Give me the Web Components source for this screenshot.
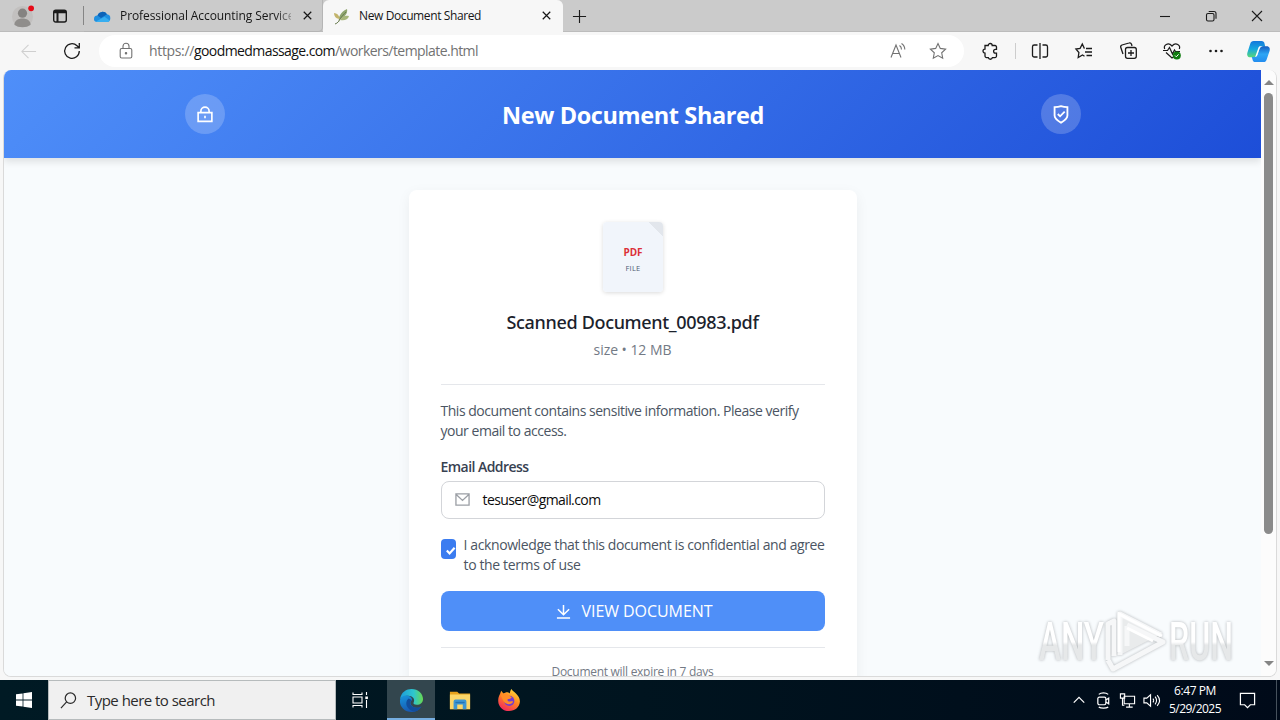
<!DOCTYPE html>
<html lang="en">
<head>
<meta charset="utf-8">
<title>New Document Shared</title>
<style>
	html, body { margin: 0; height: 100%; overflow: hidden; }
	body {
		width: 1280px;
		height: 720px;
		display: flex;
		flex-direction: column;
		font-family: "Open Sans", "Noto Sans", sans-serif;
		color: #1b1b1b;
	}
</style>
</head>
<body>
<browser-window>
	<browser-tab slot="tab" icon="onedrive" faded><fit-text w="180">Professional Accounting Services</fit-text></browser-tab>
	<browser-tab slot="tab" icon="leaf" active><fit-text w="122">New Document Shared</fit-text></browser-tab>
	<share-header><fit-text w="262">New Document Shared</fit-text></share-header>
	<document-card></document-card>
</browser-window>
<task-bar></task-bar>
<any-watermark></any-watermark>

<script>
const ICONS = {
	profile: [24, `<circle cx="12" cy="12" r="11" fill="#c2c0bf"/><circle cx="12" cy="8.500" r="4.800" fill="#858381"/><path d="M3.500 20.500c0-8.500 17-8.500 17 0-4 3.500-13 3.500-17 0z" fill="#8f8d8b"/><circle cx="21" cy="3.500" r="3" fill="#e60b18"/>`],
	workspace: [16, `<rect x="1.700" y="2.200" width="12.600" height="11.800" rx="2"/><path d="M2 4.300h12M5.500 5v9M2 2.900h12" stroke-width="2"/>`, 1.4],
	onedrive: [18, `<path d="M1 12.500a3.700 3.700 0 0 1 3.500-4A5.300 5.300 0 0 1 14 7.300a4 4 0 0 1 3.300 4.200c0 2-1.500 3.500-3.300 3.500H4c-1.700 0-3-1-3-2.500z" fill="#1f8fe0"/><path d="M4.500 8.500A5.300 5.300 0 0 1 14 7.300L8 11z" fill="#0d63b8"/><path d="M3 14.400 11.500 9.800l5.300 3.600c-.6 1-1.600 1.600-2.800 1.600H4z" fill="#37aef0"/>`],
	leaf: [18, `<g stroke="none"><path d="M7 15C6 11 8 5 15 2c1 4-2 8-7 10z" fill="#8fa56f"/><path d="M8 13c2-4 5-5 9-4-1 4-5 5-9 4z" fill="#a8b77b"/><path d="M8 12C7 8 5 6 2 6c0 3 2 6 6 6z" fill="#c3b46c"/></g><path d="M3 17c3-1 4-3 5-5 2-3 4-5 6-7" stroke="#697c50"/>`],
	close: [16, `<path d="M4 4l8 8M12 4l-8 8"/>`, 1.3],
	plus: [16, `<path d="M8 1v14M1 8h14"/>`, 1.2],
	minimize: [16, `<path d="M3 8.500h10"/>`, 1.1],
	restore: [16, `<rect x="3.500" y="5.500" width="7.500" height="7.500" rx="1.500"/><path d="M5.700 3.500H11a2 2 0 0 1 2 2v5.300"/>`, 1.1],
	exit: [16, `<path d="M3 3l10 10M13 3L3 13"/>`, 1.1],
	back: [18, `<path d="M17 9H2M9 2L2 9l7 7"/>`, 1.1],
	reload: [18, `<path d="M16.300 9a7.300 7.300 0 1 1-2.300-5.300l2.300 2.100M16.300 1v4.800h-4.800"/>`, 1.3],
	lock: [18, `<rect x="3.200" y="6.500" width="11.600" height="9.500" rx="1.500"/><path d="M6 6.500V4.300a3 3 0 0 1 6 0v2.200"/><circle cx="9" cy="11.200" r=".7" fill="currentColor"/>`, 1.1],
	read: [18, `<path d="M2 15.500L7 3l5 12.500M3.700 11.500h6.700M10.500 3.500c1.500 1 2 2.300 2 4M12.500 1.500c2.300 1.500 3.300 3.500 3.300 6"/>`, 1.1],
	star: [18, `<path d="M9 1.500l2.300 4.900 5.300.7-3.900 3.700 1 5.400L9 13.600l-4.700 2.600 1-5.400-3.900-3.700 5.300-.7z"/>`, 1.1],
	puzzle: [18, `<path d="M4 3.500h3.200a2 2 0 0 1 4 0H14a1.500 1.500 0 0 1 1.500 1.500v2.300h-1a1.900 1.900 0 0 0 0 3.800h1v3a1.500 1.500 0 0 1-1.500 1.500h-2.600a2.100 2.100 0 0 1-4.100 0H5.500A1.500 1.500 0 0 1 4 14.100v-3a2 2 0 1 1 0-4z"/>`, 1.3],
	split: [18, `<path d="M6.500 3H3.300A1.800 1.800 0 0 0 1.500 4.800v8.400A1.800 1.800 0 0 0 3.300 15h3.200M11.500 3h3.200a1.800 1.800 0 0 1 1.800 1.800v8.400a1.800 1.800 0 0 1-1.800 1.800h-3.200M9 1v16"/>`, 1.3],
	favorites: [18, `<path d="M9.500 6.300h-.2L7.300 2 5.100 6.300l-4.200.7 3 3.500-.7 5L7.500 13l2 1.200M11 6.500h6M10 10h7M11.500 13.500H17"/>`, 1.3],
	collections: [18, `<rect x="6.500" y="5.500" width="10.800" height="10.800" rx="2"/><path d="M12 8v6M9 11h6M4 12L1.800 5.500A2 2 0 0 1 3 3l7-2a2 2 0 0 1 2.500 1.200L13 4"/>`, 1.3],
	heart: [18, `<path d="M1.700 7C.2 3.500 5-.5 9 4c4-4.500 8.800-.5 7.300 3M3 10.500L9 16l2-1.500M0 8.500h4.500L6.500 5.500 9.500 12l2-4 1 1.500H17"/><circle cx="13.800" cy="13.500" r="4" fill="#107c10" stroke="none"/><path d="M12 13.500l1.300 1.300 2.300-2.500" stroke="#fff" stroke-width="1"/>`, 1.2],
	dots: [18, `<g fill="currentColor" stroke="none"><circle cx="3.500" cy="9" r="1.300"/><circle cx="9" cy="9" r="1.300"/><circle cx="14.500" cy="9" r="1.300"/></g>`],
	copilot: [26, `<defs><linearGradient id="a" x2="0" y2="1"><stop stop-color="#1477dc"/><stop offset=".5" stop-color="#16a8df"/><stop offset="1" stop-color="#58d878"/></linearGradient><linearGradient id="b" x2="0" y2="1"><stop stop-color="#145dc0"/><stop offset=".5" stop-color="#2ea6f5"/><stop offset="1" stop-color="#238cef"/></linearGradient></defs><g stroke="none"><path d="M8 2h8c2 0 3 1 3.300 3l.7 3h-3c-2 0-3 1-3.600 3l-1.700 5c-.6 2-1.700 3-3.700 3H4.500C1.500 19 .7 16.500 1.500 14L4.400 5C5 3 6 2 8 2z" fill="url(#a)"/><path d="M18 24h-8c-2 0-3-1-3.300-3L6 18.600h2.500c2 0 3-1 3.600-3l1.700-5c.6-2 1.700-3 3.700-3h4c3 0 3.800 2.500 3 5l-2.900 8.400c-.6 2-1.600 3-3.600 3z" fill="url(#b)"/><path d="M9.500 18.600L13 8.800c.4-1 1-1.300 2-1.300h2.500c-2 .4-3 1.300-3.700 3.300L12 16c-.4 1.500-1.200 2.300-2.500 2.600z" fill="#fff"/></g>`],
	padlock: [24, `<path d="M4.500 10.500h15v9.500h-15zM7.500 10.500V9a4.500 4.500 0 0 1 9 0v1.500M12 14v2.500"/>`, 1.8],
	shield: [24, `<path d="M12 3.500c2.500.8 4.500 1 7 1v9c0 3.500-3 5.500-7 8-4-2.500-7-4.500-7-8v-9c2.500 0 4.500-.2 7-1zM8.500 12l2.500 2.500 5-5"/>`, 2],
	mail: [16, `<path d="M1 2h14v12H1zM1 2.500l7 6.500 7-6.500"/>`, 1.4],
	download: [16, `<path d="M8 1v10M2 5.500L8 11.500l6-6M1 14.800h14"/>`, 1.6],
	check: [12, `<path d="M2 6l3 3.200L10.500 3"/>`, 2.4],
	windows: [16, `<path d="M0 2.300L6.600 1.400V7.600H0zM7.400 1.300L16 0v7.600H7.400zM0 8.400h6.600v6.200L0 13.700zM7.400 8.400H16V16l-8.600-1.300z" fill="currentColor" stroke="none"/>`],
	search: [18, `<circle cx="11" cy="6.500" r="5.500"/><path d="M7 10.500L1 17"/>`, 1.3],
	taskview: [18, `<path d="M2 1.500v2h9v-2M2 6h9v6H2zM2 16.500v-2h9v2M15.500 1v3M15.500 9v8"/><path d="M14.300 5.500h2.600v2.600h-2.600z" fill="currentColor" stroke="none"/>`, 1.1],
	edge: [26, `<defs><linearGradient id="t" x2="1"><stop stop-color="#1c9cdc"/><stop offset=".6" stop-color="#2fc6cd"/><stop offset="1" stop-color="#68d94f"/></linearGradient><linearGradient id="e" y2="1" x2=".4"><stop stop-color="#1796de"/><stop offset="1" stop-color="#1757b0"/></linearGradient></defs><g stroke="none"><path d="M1 12C2 4 8 1 13 1c7 0 12 5 12 10.500 0 4-3 6-6.500 6-3 0-4-1.300-3.200-2.600C17 11.500 14 8 9.500 8 5.500 8 2 10 1 12z" fill="url(#t)"/><path d="M1 13c.5-4 5-6 8.500-5 3 .8 4.500 3 4 4.500-4 3 0 8 4.800 8 2.200 0 3.700-.5 5-1.300C21 23 17 25 13 25 6.500 25 .5 20 1 13z" fill="url(#e)"/><path d="M10 11c-5 4-2 12 6 13.600C20 24 22 21 23.300 19.200c-1.300.8-2.800 1.300-5 1.300-5 0-8.800-4-5.200-8z" fill="#124d9b"/></g>`],
	explorer: [24, `<g stroke="none"><path d="M1 3h8l2 2h12v17H1z" fill="#e6a11c"/><path d="M1 6h22v16H1z" fill="#fbd669"/><path d="M5 22v-8.500a2 2 0 0 1 2-2h10a2 2 0 0 1 2 2V22h-4v-5H9v5z" fill="#3d96d2"/><path d="M7 14h10v1.500H7z" fill="#2373b4"/></g>`],
	firefox: [26, `<defs><linearGradient id="f" x1=".8" x2=".25" y2="1"><stop stop-color="#ffe13c"/><stop offset=".45" stop-color="#ff8a20"/><stop offset="1" stop-color="#f4235f"/></linearGradient></defs><g stroke="none"><path d="M3.500 6l1-3 2.500 3 3-1.500c2 0 3 .5 4 1.500 0-2 .5-3.500 1.700-5 .8 2 3 3 4.800 5 2.500 2.500 4.500 5 4.300 9C24.300 21 19.500 25 13 25S1.500 20.500 1.300 14c0-3 .5-5 2.200-8z" fill="url(#f)"/><circle cx="13.300" cy="14" r="5.500" fill="#743bd1"/><path d="M4 8c3-3 7-2.500 9 0l3 2c-1 2-3 2-4 2-1 .5-1 2 1 2.500 2 .3 3-.5 4.500 0-1 3.500-7 4-9.500 1S5.500 10 4 8z" fill="#ff8d27"/></g>`],
	chevron: [16, `<path d="M2 11l6-6 6 6"/>`, 1.4],
	meet: [18, `<rect x="3" y="5.500" width="8.500" height="8" rx="1.500"/><path d="M11.500 8.500l3-2v6l-3-2M4 2.500c2.500-2 7.500-2 10 0M4 16c2.500 1.500 7.500 1.500 10 0"/>`, 1.3],
	network: [18, `<path d="M5.500 4.500h11v8h-11zM11 12.500V16M7.500 16h7M1.500 2h4.500v4.500H1.500zM3.700 6.500V14h2"/>`, 1.2],
	volume: [18, `<path d="M1 6.500h3L8 3v12l-4-3.500H1zM10.500 7c1 1 1 3 0 4M12.800 5c2 2.500 2 5.500 0 8M15 3.300c3 3.500 3 8 0 11.500"/>`, 1.2],
	notice: [18, `<path d="M1.500 1.500h15v12H12L9 16.500l-3-3H1.500z"/>`, 1.3],
};

class UiIcon extends HTMLElement {
	connectedCallback() {
		const size = this.getAttribute('size') || 18;
		const [box, shapes, stroke] = ICONS[this.getAttribute('name')];
		this.attachShadow({mode: 'open'}).innerHTML = `
			<style>
				:host { display: block; flex: none; width: ${size}px; height: ${size}px; }
				svg { display: block; width: 100%; height: 100%; overflow: visible; }
			</style>
			<svg viewBox="0 0 ${box} ${box}" fill="none" ${stroke ? `stroke="currentColor" stroke-width="${stroke}"` : ''}>${shapes}</svg>
		`;
	}
}

// One line of text, tracked so that it takes up exactly w pixels.
class FitText extends HTMLElement {
	connectedCallback() {
		this.attachShadow({mode: 'open'}).innerHTML = `
			<style>
				:host { display: inline-flex; flex: none; }
				span { white-space: nowrap; flex: none; }
			</style>
			<span><slot></slot></span>
		`;
		const width = +this.getAttribute('w');
		const span = this.shadowRoot.querySelector('span');
		const natural = span.getBoundingClientRect().width;
		span.style.letterSpacing = `${(width - natural) / this.textContent.length}px`;
		this.style.width = `${width}px`;
	}
}

class BrowserTab extends HTMLElement {
	connectedCallback() {
		this.attachShadow({mode: 'open'}).innerHTML = `
			<style>
				:host {
					box-sizing: border-box;
					width: 239px;
					height: 32px;
					padding: 0 7px 0 9px;
					display: flex;
					align-items: center;
					gap: 9px;
					font-size: 12px;
					color: #161616;
					border-bottom: 1px solid #b5b5b5;
					border-right: 1px solid #b5b5b5;
					border-radius: 0 0 5px 0;
				}
				:host([active]) {
					width: 240px;
					padding-right: 8px;
					background: #f7f7f7;
					border-color: #f7f7f7;
					border-radius: 6px 6px 0 0;
				}
				.label { flex: 1; min-width: 0; overflow: hidden; display: flex; line-height: 20px; }
				:host([faded]) .label { mask-image: linear-gradient(90deg, #000 155px, transparent 178px); }
			</style>
			<ui-icon name="${this.getAttribute('icon')}" size="18"></ui-icon>
			<div class="label"><slot></slot></div>
			<ui-icon name="close" size="15"></ui-icon>
		`;
	}
}

class BrowserWindow extends HTMLElement {
	connectedCallback() {
		this.attachShadow({mode: 'open'}).innerHTML = `
			<style>
				:host { display: flex; flex-direction: column; height: 680px; background: #f7f7f7; }
				.strip { height: 32px; display: flex; background: #cbcbcb; box-shadow: inset 0 -1px #bcbcbc; }
				.cell { display: flex; align-items: center; justify-content: center; flex: none; }
				.rule { width: 1px; height: 19px; margin: 6px 0 0; background: #858585; }
				.space { flex: 1; }
				.bar { height: 38px; display: flex; align-items: center; }
				.pill {
					box-sizing: border-box;
					width: 865px;
					height: 32px;
					padding: 0 17px 0 18px;
					display: flex;
					align-items: center;
					border-radius: 16px;
					background: #fff;
					color: #727272;
					font-size: 14px;
				}
				.pill b { font-weight: 400; color: #111; display: flex; }
				.url { flex: 1; display: flex; margin-left: 14px; line-height: 20px; }
				.pill .read { margin-right: 22px; }
				.divider { width: 1px; height: 16px; background: #cdcdcd; margin-right: 2px; }
				.view {
					box-sizing: border-box;
					height: 607px;
					margin: 0 3px;
					display: flex;
					overflow: hidden;
					border: 1px solid #dadada;
					border-top: 0;
					border-radius: 8px;
					background: #f8fafc;
				}
				.page { width: 1257px; overflow: hidden; background: #f8fbfd; }
				.scroll {
					flex: 1;
					display: flex;
					flex-direction: column;
					align-items: center;
					background: #fcfcfc;
				}
				.up, .down { border: 5px solid transparent; width: 0; height: 0; }
				.up { border-top: 0; border-bottom-color: #858585; margin: 10px 0 8px; }
				.down { border-bottom: 0; border-top-color: #858585; margin: auto 0 10px; }
				.thumb { width: 9px; height: 441px; border-radius: 5px; background: #8b8b8b; }
			</style>
			<div class="strip">
				<div class="cell" style="width:44px"><ui-icon name="profile" size="23"></ui-icon></div>
				<div class="cell" style="width:32px"><ui-icon name="workspace" size="16"></ui-icon></div>
				<div class="cell" style="width:8px;align-items:flex-start;justify-content:flex-end"><div class="rule"></div></div>
				<slot name="tab"></slot>
				<div class="cell" style="width:33px"><ui-icon name="plus" size="15"></ui-icon></div>
				<div class="space"></div>
				<div class="cell" style="width:46px"><ui-icon name="minimize" size="16"></ui-icon></div>
				<div class="cell" style="width:46px"><ui-icon name="restore" size="16"></ui-icon></div>
				<div class="cell" style="width:46px"><ui-icon name="exit" size="16"></ui-icon></div>
			</div>
			<div class="bar">
				<div class="cell" style="width:56px;color:#cfcfcf"><ui-icon name="back" size="17"></ui-icon></div>
				<div class="cell" style="width:31px;margin-right:12px"><ui-icon name="reload"></ui-icon></div>
				<div class="pill">
					<ui-icon name="lock"></ui-icon>
					<div class="url"><fit-text w="45">https://</fit-text><b><fit-text w="141">goodmedmassage.com</fit-text></b><fit-text w="143">/workers/template.html</fit-text></div>
					<ui-icon class="read" name="read"></ui-icon>
					<ui-icon name="star"></ui-icon>
				</div>
				<div class="cell" style="width:51px"><ui-icon name="puzzle"></ui-icon></div>
				<div class="divider"></div>
				<div class="cell" style="width:43px"><ui-icon name="split"></ui-icon></div>
				<div class="cell" style="width:46px"><ui-icon name="favorites"></ui-icon></div>
				<div class="cell" style="width:42px"><ui-icon name="collections"></ui-icon></div>
				<div class="cell" style="width:45px"><ui-icon name="heart"></ui-icon></div>
				<div class="cell" style="width:44px"><ui-icon name="dots"></ui-icon></div>
				<div class="cell" style="width:40px"><ui-icon name="copilot" size="25"></ui-icon></div>
			</div>
			<div class="view">
				<div class="page"><slot></slot></div>
				<div class="scroll"><div class="up"></div><div class="thumb"></div><div class="down"></div></div>
			</div>
		`;
	}
}

class ShareHeader extends HTMLElement {
	connectedCallback() {
		this.attachShadow({mode: 'open'}).innerHTML = `
			<style>
				:host {
					display: flex;
					justify-content: center;
					height: 88px;
					color: #fff;
					font-size: 23.5px;
					font-weight: 700;
					background: linear-gradient(135deg, #4f8ff9, #1d4ed8);
					box-shadow: 0 4px 7px rgba(0, 0, 0, .1);
				}
				.inner { width: 896px; display: flex; align-items: center; justify-content: space-between; }
				.round {
					width: 40px;
					height: 40px;
					display: flex;
					align-items: center;
					justify-content: center;
					border-radius: 50%;
					background: rgba(255, 255, 255, .2);
				}
				h1 { margin: 2px 0 0 1px; display: flex; font: inherit; line-height: 32px; }
			</style>
			<div class="inner">
				<div class="round"><ui-icon name="padlock" size="22"></ui-icon></div>
				<h1><slot></slot></h1>
				<div class="round"><ui-icon name="shield" size="22"></ui-icon></div>
			</div>
		`;
	}
}

class PdfThumb extends HTMLElement {
	connectedCallback() {
		this.attachShadow({mode: 'open'}).innerHTML = `
			<style>
				:host {
					width: 60px;
					height: 70px;
					display: flex;
					flex-direction: column;
					align-items: center;
					border-radius: 4px;
					background: linear-gradient(225deg, #e2e6ec 10px, #f1f5fb 10.5px);
					box-shadow: 0 1px 4px rgba(0, 0, 0, .15);
				}
				b, span { display: flex; }
				b { margin: 23px 0 0 1px; font-size: 10px; line-height: 14px; color: #dc3038; }
				span { margin: 4px 0 0 1px; font-size: 7.5px; line-height: 10px; color: #4d5c72; }
			</style>
			<b><fit-text w="19">PDF</fit-text></b>
			<span><fit-text w="15">FILE</fit-text></span>
		`;
	}
}

class DocumentCard extends HTMLElement {
	connectedCallback() {
		this.attachShadow({mode: 'open'}).innerHTML = `
			<style>
				:host {
					box-sizing: border-box;
					width: 448px;
					height: 560px;
					margin: 32px auto 0;
					padding: 32px;
					display: flex;
					flex-direction: column;
					border-radius: 8px;
					background: #fff;
					box-shadow: 0 4px 14px rgba(0, 0, 0, .06);
					font-size: 14px;
					line-height: 20px;
					color: #4b5563;
				}
				pdf-thumb { align-self: center; }
				h2 { display: flex; justify-content: center; margin: 16px 0 0; font: 500 18px/28px "Noto Sans", sans-serif; color: #1b222c; }
				.size { display: flex; justify-content: center; margin-top: 4px; color: #737a85; }
				.line { height: 1px; background: #e5e7eb; }
				.intro { display: flex; flex-direction: column; margin-top: 16px; }
				.label { display: flex; margin-top: 16px; font-weight: 600; color: #374151; }
				.field {
					box-sizing: border-box;
					height: 38px;
					margin-top: 4px;
					padding: 0 12px 0 13px;
					display: flex;
					align-items: center;
					gap: 13px;
					border: 1px solid #d3d5d9;
					border-radius: 8px;
					color: #0c0c0c;
				}
				.field ui-icon { color: #9b9fa5; margin-top: -2px; }
				.agree { display: flex; gap: 8px; margin-top: 16px; }
				.box {
					width: 15px;
					height: 20px;
					margin-top: 4px;
					flex: none;
					display: flex;
					align-items: center;
					justify-content: flex-end;
					border-radius: 4px;
					background: #3b7cf0;
					color: #fff;
				}
				.box ui-icon { margin-top: 2px; }
				.terms { display: flex; flex-direction: column; }
				.button {
					height: 40px;
					margin-top: 16px;
					padding-left: 3px;
					display: flex;
					align-items: center;
					justify-content: center;
					gap: 11px;
					border-radius: 8px;
					background: #4f8ff8;
					color: #fff;
					font-size: 16px;
				}
				.expire { display: flex; justify-content: center; margin-top: 16px; font-size: 12px; line-height: 16px; color: #737a85; }
			</style>
			<pdf-thumb></pdf-thumb>
			<h2><fit-text w="252">Scanned Document_00983.pdf</fit-text></h2>
			<div class="size"><fit-text w="78">size • 12 MB</fit-text></div>
			<div class="line" style="margin-top:24px"></div>
			<div class="intro">
				<fit-text w="358">This document contains sensitive information. Please verify</fit-text>
				<fit-text w="126">your email to access.</fit-text>
			</div>
			<div class="label"><fit-text w="88">Email Address</fit-text></div>
			<div class="field"><ui-icon name="mail" size="15"></ui-icon><fit-text w="118">tesuser@gmail.com</fit-text></div>
			<div class="agree">
				<div class="box"><ui-icon name="check" size="11"></ui-icon></div>
				<div class="terms">
					<fit-text w="361">I acknowledge that this document is confidential and agree</fit-text>
					<fit-text w="117">to the terms of use</fit-text>
				</div>
			</div>
			<div class="button"><ui-icon name="download" size="15"></ui-icon><fit-text w="131">VIEW DOCUMENT</fit-text></div>
			<div class="line" style="margin-top:16px"></div>
			<div class="expire"><fit-text w="162">Document will expire in 7 days</fit-text></div>
		`;
	}
}

class TaskBar extends HTMLElement {
	connectedCallback() {
		this.attachShadow({mode: 'open'}).innerHTML = `
			<style>
				:host {
					display: flex;
					height: 40px;
					color: #fff;
					background: linear-gradient(90deg, #001a24, #00141f 50%, #000a19);
				}
				.cell { width: 48px; flex: none; display: flex; align-items: center; justify-content: center; }
				.find {
					box-sizing: border-box;
					width: 288px;
					padding: 0 0 0 11px;
					display: flex;
					align-items: center;
					gap: 10px;
					background: #f0f0f0;
					border: 1px solid #b6bbbc;
					color: #2b2b2b;
					font-size: 15px;
				}
				.on { background: #33464e; box-shadow: inset 0 -2px #76aee0; }
				.space { flex: 1; }
				.tray { width: 24px; }
				.clock {
					width: 64px;
					display: flex;
					flex-direction: column;
					align-items: center;
					font-size: 12px;
					line-height: 18px;
					padding-top: 2px;
				}
				.peek { width: 3px; border-left: 1px solid #46515c; }
			</style>
			<div class="cell"><ui-icon name="windows" size="16"></ui-icon></div>
			<div class="find"><ui-icon name="search" size="17"></ui-icon><fit-text w="128">Type here to search</fit-text></div>
			<div class="cell"><ui-icon name="taskview"></ui-icon></div>
			<div class="cell on" style="margin-left:3px"><ui-icon name="edge" size="25"></ui-icon></div>
			<div class="cell" style="width:50px"><ui-icon name="explorer" size="22"></ui-icon></div>
			<div class="cell"><ui-icon name="firefox" size="24"></ui-icon></div>
			<div class="space"></div>
			<div class="cell tray"><ui-icon name="chevron" size="14"></ui-icon></div>
			<div class="cell tray"><ui-icon name="meet" size="17"></ui-icon></div>
			<div class="cell tray"><ui-icon name="network" size="17"></ui-icon></div>
			<div class="cell tray"><ui-icon name="volume" size="17"></ui-icon></div>
			<div class="clock"><fit-text w="42">6:47 PM</fit-text><fit-text w="52">5/29/2025</fit-text></div>
			<div class="cell" style="width:40px;margin-right:9px"><ui-icon name="notice" size="17"></ui-icon></div>
			<div class="peek"></div>
		`;
	}
}

class AnyWatermark extends HTMLElement {
	connectedCallback() {
		this.attachShadow({mode: 'open'}).innerHTML = `
			<style>
				:host { position: absolute; left: 1036px; top: 606px; width: 200px; height: 70px; pointer-events: none; }
				svg { display: block; overflow: visible; filter: drop-shadow(0 0 1.5px rgba(90, 95, 100, .45)); }
				text { font: 500 53px Roboto, sans-serif; }
			</style>
			<svg width="200" height="70" viewBox="0 0 200 70">
				<defs>
					<linearGradient id="w" x2="0" y2="1">
						<stop offset=".5" stop-color="#fff"/>
						<stop offset=".55" stop-color="#e6e8e9"/>
					</linearGradient>
				</defs>
				<g fill="url(#w)">
					<text x="3" y="54" textLength="65" lengthAdjust="spacingAndGlyphs">ANY</text>
					<text x="133" y="54" textLength="64" lengthAdjust="spacingAndGlyphs">RUN</text>
				</g>
				<path d="M84 7v42l39-20z" fill="#e9ebec"/>
				<path d="M72 54V18l6-3v35M84 49V8l41 21M91 20v20M72 54l5 9 50-27-36-17" fill="none" stroke="#f6f7f8" stroke-width="5" stroke-linejoin="round"/>
				<path d="M83 46V8l43 22M91 22l26 13" fill="none" stroke="#fff" stroke-width="3"/>
			</svg>
		`;
	}
}

customElements.define('ui-icon', UiIcon);
customElements.define('browser-tab', BrowserTab);
customElements.define('pdf-thumb', PdfThumb);
customElements.define('share-header', ShareHeader);
customElements.define('document-card', DocumentCard);
customElements.define('browser-window', BrowserWindow);
customElements.define('task-bar', TaskBar);
customElements.define('any-watermark', AnyWatermark);
// Last, so that every line is measured in the font its container gives it.
customElements.define('fit-text', FitText);
</script>
</body>
</html>
